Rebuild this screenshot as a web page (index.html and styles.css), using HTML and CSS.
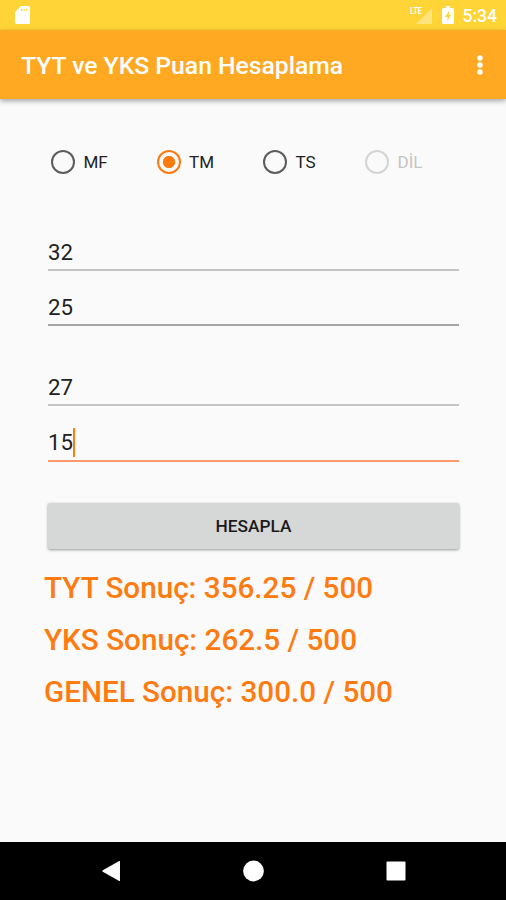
FILE: index.html
```html
<!DOCTYPE html>
<html lang="tr">
<head>
    <meta charset="UTF-8">
    <meta name="viewport" content="width=device-width, initial-scale=1.0">
    <title>TYT ve YKS Puan Hesaplama</title>
    <link rel="stylesheet" href="styles.css">
</head>
<body>
    <!-- Status Bar -->
    <div class="status-bar">
        <svg class="sd-icon" width="16" height="20" viewBox="0 0 16 20">
            <path fill="#fff" fill-rule="evenodd" d="M6 1h7.500q1.500 0 1.500 1.500v15q0 1.500-1.500 1.500h-12q-1.500 0-1.500-1.500V7zM6 4v2h1.300V4zM8.500 4v2h1.300V4zM11 4v2h1.300V4z"/>
        </svg>
        <div class="status-right">
            <svg class="signal-icon" width="24" height="20" viewBox="0 0 24 20">
                <path fill="#fff" fill-opacity=".35" d="M23 3v16H7z"/>
                <text x="1" y="9" class="lte" textLength="12" lengthAdjust="spacingAndGlyphs">LTE</text>
            </svg>
            <svg class="battery-icon" width="12" height="19" viewBox="0 0 12 19">
                <path fill="#fff" fill-rule="evenodd" d="M4 0h4v2h2.500q1.500 0 1.500 1.500v13q0 1.500-1.500 1.500h-9q-1.500 0-1.500-1.500V3.500q0-1.500 1.500-1.500H4zM7 5L3 11h2.500V15L9 9H7z"/>
            </svg>
            <span class="clock">5:34</span>
        </div>
    </div>

    <!-- App Bar -->
    <header class="app-bar">
        <h1>TYT ve YKS Puan Hesaplama</h1>
        <svg class="menu-icon" width="6" height="20" viewBox="0 0 6 20">
            <circle cx="3" cy="3" r="2.700"/>
            <circle cx="3" cy="10" r="2.700"/>
            <circle cx="3" cy="17" r="2.700"/>
        </svg>
    </header>

    <main class="container">
        <div class="types">
            <label><input type="radio" name="type">MF</label>
            <label><input type="radio" name="type" checked>TM</label>
            <label><input type="radio" name="type">TS</label>
            <label class="disabled"><input type="radio" name="type" disabled>DİL</label>
        </div>

        <div class="fields">
            <div class="field soft">32</div>
            <div class="field">25</div>
        </div>
        <div class="fields">
            <div class="field soft">27</div>
            <div class="field active">15<span class="caret"></span></div>
        </div>

        <button class="calculate">HESAPLA</button>

        <!-- Results -->
        <div class="results">
            <p>TYT Sonuç: 356.25 / 500</p>
            <p>YKS Sonuç: 262.5 / 500</p>
            <p>GENEL Sonuç: 300.0 / 500</p>
        </div>
    </main>

    <!-- Navigation Bar -->
    <nav class="nav-bar">
        <svg width="20" height="22" viewBox="0 0 20 22"><path d="M18 1.500v19q0 .8-.8.400L.8 11.800q-.9-.8 0-1.600L17.200 1.100q.8-.4.8.4z"/></svg>
        <svg width="22" height="22" viewBox="0 0 22 22"><circle cx="10.500" cy="11" r="10.400"/></svg>
        <svg width="20" height="22" viewBox="0 0 20 22"><rect x="0.500" y="1.500" width="19" height="19" rx="1"/></svg>
    </nav>
</body>
</html>
```

FILE: styles.css
```css
* {
    box-sizing: border-box;
}
body {
    margin: 0;
    height: 900px;
    display: flex;
    flex-direction: column;
    overflow: hidden;
    font-family: Roboto, sans-serif;
    background-color: #fafafa;
    color: #212121;
}

/* Status bar */
.status-bar {
    display: flex;
    justify-content: space-between;
    height: 30px;
    padding: 5px 9px 0 15px;
    background-color: #ffd436;
}
.status-right {
    display: flex;
}
.lte {
    font-size: 9px;
    font-weight: 700;
    fill: #fff;
}
.battery-icon {
    margin: 1px 9px 0 9px;
}
.clock {
    font-size: 17.5px;
    font-weight: 500;
    line-height: 22px;
    color: #fff;
}

/* App bar */
.app-bar {
    display: flex;
    align-items: center;
    justify-content: space-between;
    height: 69px;
    padding: 0 23px 0 21px;
    background-color: #ffa923;
    box-shadow: 0 2px 5px rgba(0, 0, 0, 0.35);
}
.app-bar h1 {
    margin: 2px 0 0;
    font-size: 24.7px;
    font-weight: 500;
    line-height: 30px;
    color: #fff;
}
.menu-icon {
    fill: #fff;
}

.container {
    flex: 1;
    padding: 48px 47px 0 48px;
}

/* Radio buttons */
.types {
    display: grid;
    grid-template-columns: 105.5px 106.5px 102px auto;
    padding-left: 3px;
    margin-bottom: 55px;
}
.types label {
    display: flex;
    align-items: center;
    gap: 8.5px;
    height: 30px;
    font-size: 17px;
}
.types input {
    appearance: none;
    width: 24px;
    height: 24px;
    margin: 0;
    border: 2px solid #5c5c5c;
    border-radius: 50%;
}
.types input:checked {
    border-color: #ff7b0f;
    background: radial-gradient(circle, #ff7b0f 5.8px, transparent 6.5px);
}
.types .disabled {
    color: #c4c4c4;
}
.types .disabled input {
    border-color: #d4d4d4;
}

/* Score inputs */
.fields {
    margin-bottom: 41px;
}
.field {
    display: flex;
    align-items: center;
    height: 55px;
    padding-top: 18px;
    border-bottom: 2px solid #a5a5a5;
    font-size: 22.2px;
    line-height: 30px;
}
.field.soft {
    height: 39px;
    padding-top: 2px;
    border-color: #c4c4c4;
}
.field.active {
    height: 56px;
    border-color: #ff9b6b;
}
.caret {
    width: 2px;
    height: 29px;
    background-color: #ff7b0f;
}

.calculate {
    display: block;
    width: 411px;
    height: 46px;
    border: none;
    border-radius: 2px;
    background-color: #d6d7d7;
    box-shadow: 0 1px 3px rgba(0, 0, 0, 0.4);
    font-family: inherit;
    font-size: 17.3px;
    font-weight: 500;
    color: #1a1a1a;
}

/* Results */
.results {
    margin: 13px 0 0 -4px;
}
.results p {
    margin: 0;
    font-size: 29.65px;
    font-weight: 500;
    line-height: 52px;
    color: #ff7b0f;
}

/* Navigation bar */
.nav-bar {
    display: flex;
    align-items: center;
    justify-content: space-between;
    height: 58px;
    padding: 0 100px 0 102px;
    background-color: #000;
}
.nav-bar svg {
    fill: #fff;
}
```
